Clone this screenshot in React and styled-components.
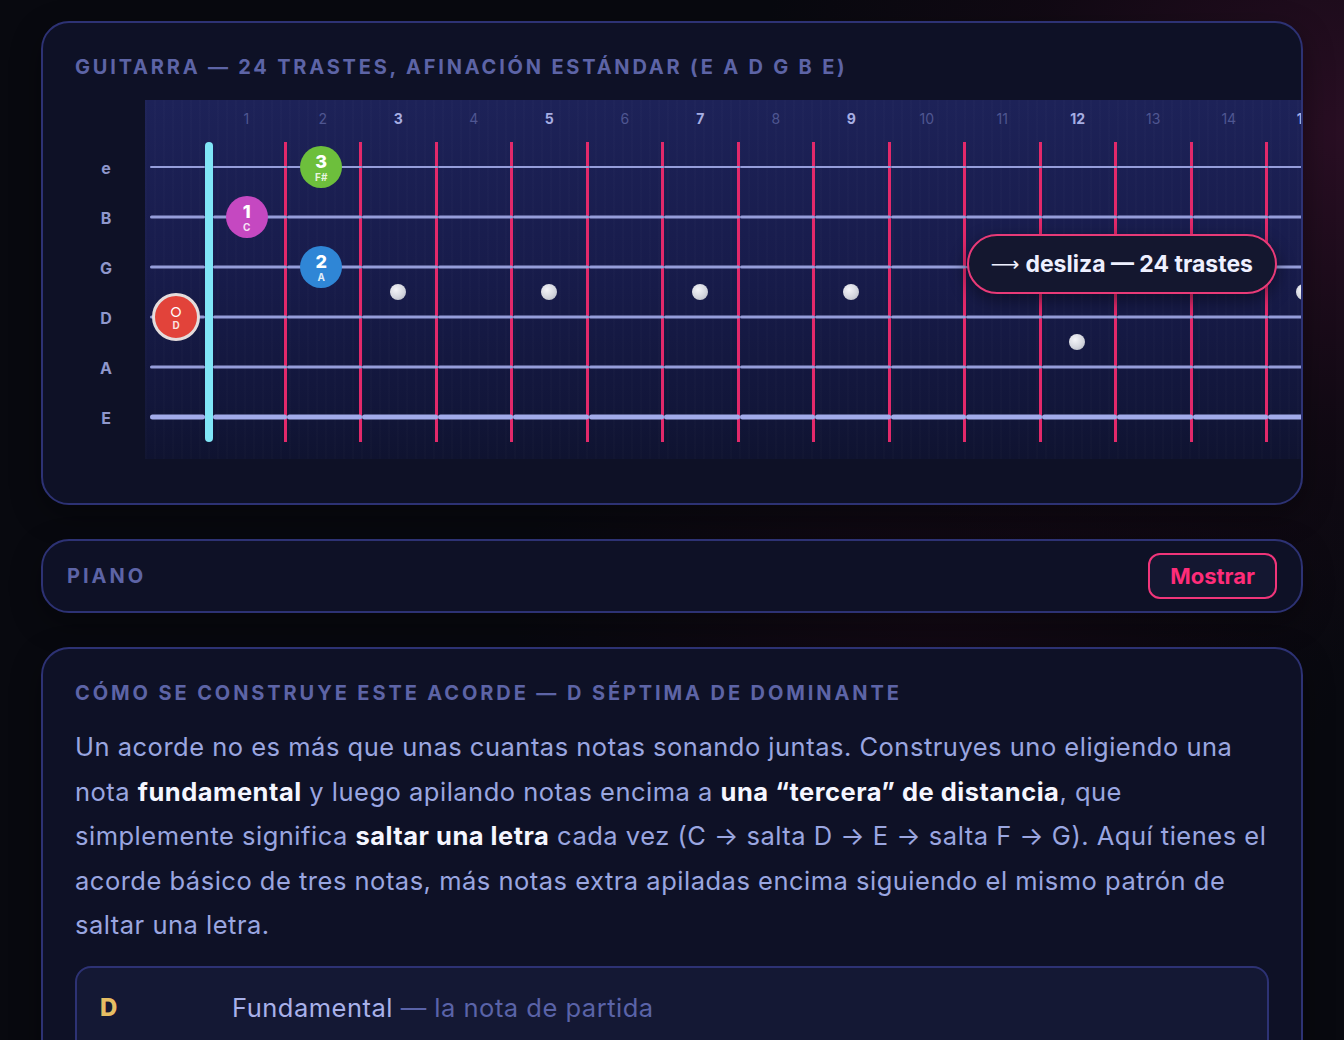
import React from 'react'
import styled, { createGlobalStyle } from 'styled-components'

const GlobalStyle = createGlobalStyle`
  html, body {
    margin: 0;
    padding: 0;
    background: #08090f;
  }
  body {
    font-family: Inter, "Noto Sans", sans-serif;
    color: #9aa6e0;
  }
`

const Page = styled.div`
  min-height: 1040px;
  padding: 21px 41px 0 41px;
  box-sizing: border-box;
  display: flex;
  flex-direction: column;
  gap: 34px;
  background:
    radial-gradient(ellipse 55% 60% at 100% 12%, rgba(52, 16, 42, 0.75) 0%, rgba(30, 10, 26, 0.4) 45%, transparent 80%),
    radial-gradient(ellipse 40% 30% at 70% 55%, rgba(40, 10, 30, 0.35) 0%, transparent 80%),
    #08090f;
  overflow: hidden;
`

const Card = styled.section`
  position: relative;
  background: #0e1126;
  border: 2px solid #2d3274;
  border-radius: 28px;
  padding: ${p => p.$pad || '32px 32px 44px 32px'};
  box-shadow: 0 10px 30px rgba(0, 0, 0, 0.35);
`

const SectionTitle = styled.h2`
  margin: 0 0 ${p => p.$mb || 21}px 0;
  font-family: Inter, "Liberation Sans", sans-serif;
  font-size: 20px;
  line-height: 24px;
  font-weight: 700;
  letter-spacing: ${p => p.$ls || 2.8}px;
  text-transform: uppercase;
  color: #5d64a6;
`

const BoardRow = styled.div`
  display: flex;
  align-items: flex-start;
`

const Labels = styled.div`
  width: 62px;
  margin-right: 8px;
  padding-top: 43px;
  display: flex;
  flex-direction: column;
  flex-shrink: 0;
`

const StringLabel = styled.div`
  height: 50px;
  display: flex;
  align-items: center;
  justify-content: center;
  font-size: 16px;
  font-weight: 700;
  color: #8f97cc;
`

const Scroller = styled.div`
  flex: 1;
  overflow: hidden;
  margin-right: -32px;
`

const Fretboard = styled.div`
  display: grid;
  grid-template-columns: 60px 8px 73.5px repeat(23, 75.5px);
  grid-template-rows: 42px repeat(6, 50px);
  padding-bottom: 17px;
  width: max-content;
  background:
    repeating-linear-gradient(90deg, rgba(255, 255, 255, 0.012) 0 2px, transparent 2px 9px),
    linear-gradient(180deg, #1d2258 0%, #181c4c 45%, #12163a 85%, #0f1330 100%);
`

const FretNumber = styled.div`
  grid-column: ${p => p.$col};
  grid-row: 1;
  display: flex;
  align-items: center;
  justify-content: center;
  padding-bottom: 6px;
  padding-right: ${p => (p.$col === 3 ? 7 : 3)}px;
  font-size: 14px;
  font-weight: ${p => (p.$marked ? 700 : 400)};
  color: ${p => (p.$marked ? '#a6aee3' : '#4f5691')};
`

const Cell = styled.div`
  grid-column: ${p => p.$col};
  grid-row: ${p => p.$row};
  position: relative;
  display: flex;
  align-items: center;
  justify-content: center;
  box-sizing: border-box;
  border-right: ${p => (p.$fret ? '3px solid #e2296a' : 'none')};

  &::before {
    content: '';
    position: absolute;
    left: ${p => (p.$open ? 5 : 0)}px;
    right: ${p => (p.$fret ? -3 : 0)}px;
    top: 50%;
    height: ${p => p.$thick}px;
    transform: translateY(-50%);
    border-radius: ${p => p.$thick}px;
    background: ${p => (p.$thick > 4 ? '#a2abea' : '#959dda')};
  }
`

const Nut = styled.div`
  grid-column: 2;
  grid-row: 2 / 8;
  width: 8px;
  border-radius: 4px;
  background: #80e6f7;
  z-index: 2;
`

const Inlay = styled.div`
  grid-column: ${p => p.$col};
  grid-row: ${p => p.$rows};
  align-self: center;
  justify-self: center;
  width: 16px;
  height: 16px;
  margin-right: 4px;
  border-radius: 50%;
  background: radial-gradient(circle at 38% 35%, #f4f4f8 0%, #d4d6de 55%, #aeb1bd 100%);
  z-index: 1;
`

const Note = styled.div`
  position: relative;
  z-index: 3;
  width: 42px;
  height: 42px;
  margin: ${p => (p.$open ? '0 0 0 2px' : '0 3px 0 0')};
  border-radius: 50%;
  background: ${p => p.$color};
  border: ${p => (p.$open ? '3px solid #e4dcdc' : 'none')};
  display: flex;
  flex-direction: column;
  align-items: center;
  justify-content: center;
  color: #ffffff;
  line-height: 1;
`

const NoteDegree = styled.span`
  font-size: ${p => (p.$open ? 13 : 18)}px;
  font-weight: ${p => (p.$open ? 500 : 800)};
  margin-top: 1px;
`

const NoteName = styled.span`
  font-size: 10px;
  font-weight: 700;
  margin-top: 1px;
  color: rgba(255, 255, 255, 0.85);
`

const SlideHint = styled.div`
  position: absolute;
  top: 211px;
  right: 24px;
  height: 60px;
  box-sizing: border-box;
  padding: 0 22px;
  display: flex;
  align-items: center;
  gap: 6px;
  border: 2px solid #e83a78;
  border-radius: 30px;
  background: #14172f;
  box-shadow: 0 6px 18px rgba(0, 0, 0, 0.45);
  font-size: 23px;
  font-weight: 700;
  color: #eef0ff;
  z-index: 5;
`

const HintArrow = styled.span`
  font-family: "DejaVu Sans", sans-serif;
  font-weight: 400;
  font-size: 20px;
`

const PianoBar = styled.div`
  display: flex;
  align-items: center;
  justify-content: space-between;
  height: 70px;
`

const PianoLabel = styled.span`
  font-size: 20px;
  font-weight: 700;
  letter-spacing: 3px;
  color: #5d64a6;
`

const ToggleButton = styled.button`
  height: 46px;
  padding: 0 20px;
  border: 2px solid #f0357a;
  border-radius: 12px;
  background: #141731;
  color: #ff2c79;
  font-family: Inter, sans-serif;
  font-size: 22px;
  font-weight: 700;
  cursor: pointer;
`

const Paragraph = styled.p`
  margin: 0 0 18px 0;
  font-size: 25.5px;
  letter-spacing: 0.5px;
  line-height: 44.5px;
  color: #9aa6e0;

  b {
    color: #f5f6ff;
    font-weight: 700;
  }
`

const ToneBox = styled.div`
  border: 2px solid #2d3274;
  border-radius: 16px;
  background: #141834;
  padding: 25px 23px 40px 23px;
`

const ToneRow = styled.div`
  display: grid;
  grid-template-columns: 132px 1fr;
  align-items: center;
  line-height: 30px;
`

const ToneLetter = styled.span`
  font-size: 24px;
  font-weight: 800;
  color: #e6bd63;
`

const ToneText = styled.span`
  font-size: 25.5px;
  letter-spacing: 0.5px;
  color: #a9b1ea;
`

const ToneHint = styled.span`
  color: #5a63a8;
`

const strings = ['e', 'B', 'G', 'D', 'A', 'E']
const thickness = [2, 3, 3, 3, 3, 5]
const markedFrets = [3, 5, 7, 9, 12, 15, 17, 19, 21, 24]
const singleDots = [3, 5, 7, 9, 15, 17, 19, 21]

// key: string index - fret (0 = open)
const notes = {
  '3-0': { color: '#e2433a', degree: '○', name: 'D', open: true },
  '0-2': { color: '#6dbf3c', degree: '3', name: 'F#' },
  '1-1': { color: '#c548c1', degree: '1', name: 'C' },
  '2-2': { color: '#2f86d6', degree: '2', name: 'A' },
}

const Guitar = () => {
  const cells = []
  strings.forEach((s, r) => {
    // f = -1 is the open column, f = 0 sits under the nut
    for (let f = -1; f <= 24; f++) {
      const col = f + 2
      const note = f === -1 ? notes[`${r}-0`] : f === 0 ? null : notes[`${r}-${f}`]
      cells.push(
        <Cell
          key={`${r}-${col}`}
          $row={r + 2}
          $col={col}
          $open={f === -1}
          $fret={f >= 1}
          $thick={thickness[r]}
        >
          {note && (
            <Note $color={note.color} $open={note.open}>
              <NoteDegree $open={note.open}>{note.degree}</NoteDegree>
              <NoteName>{note.name}</NoteName>
            </Note>
          )}
        </Cell>
      )
    }
  })

  return (
    <Card>
      <SectionTitle>Guitarra — 24 trastes, afinación estándar (E A D G B E)</SectionTitle>
      <BoardRow>
        <Labels>
          {strings.map((s, i) => (
            <StringLabel key={i}>{s}</StringLabel>
          ))}
        </Labels>
        <Scroller>
          <Fretboard>
            {Array.from({ length: 24 }, (_, i) => i + 1).map(n => (
              <FretNumber key={n} $col={n + 2} $marked={markedFrets.includes(n)}>
                {n}
              </FretNumber>
            ))}
            {cells}
            <Nut />
            {singleDots.map(n => (
              <Inlay key={n} $col={n + 2} $rows="4 / 6" />
            ))}
            <Inlay $col={14} $rows="3 / 5" />
            <Inlay $col={14} $rows="5 / 7" />
            <Inlay $col={26} $rows="3 / 5" />
            <Inlay $col={26} $rows="5 / 7" />
          </Fretboard>
        </Scroller>
      </BoardRow>
      <SlideHint>
        <HintArrow>⟶</HintArrow> desliza — 24 trastes
      </SlideHint>
    </Card>
  )
}

export default function App() {
  return (
    <>
      <GlobalStyle />
      <Page>
        <Guitar />
        <Card $pad="0 24px">
          <PianoBar>
            <PianoLabel>PIANO</PianoLabel>
            <ToggleButton>Mostrar</ToggleButton>
          </PianoBar>
        </Card>
        <Card $pad="32px 32px 40px 32px">
          <SectionTitle $mb={20} $ls={2.9}>
            Cómo se construye este acorde — D séptima de dominante
          </SectionTitle>
          <Paragraph>
            Un acorde no es más que unas cuantas notas sonando juntas. Construyes uno eligiendo una
            nota <b>fundamental</b> y luego apilando notas encima a <b>una “tercera” de distancia</b>, que
            simplemente significa <b>saltar una letra</b> cada vez (C → salta D → E → salta F → G). Aquí
            tienes el acorde básico de tres notas, más notas extra apiladas encima siguiendo el mismo
            patrón de saltar una letra.
          </Paragraph>
          <ToneBox>
            <ToneRow>
              <ToneLetter>D</ToneLetter>
              <ToneText>
                Fundamental <ToneHint>— la nota de partida</ToneHint>
              </ToneText>
            </ToneRow>
          </ToneBox>
        </Card>
      </Page>
    </>
  )
}
